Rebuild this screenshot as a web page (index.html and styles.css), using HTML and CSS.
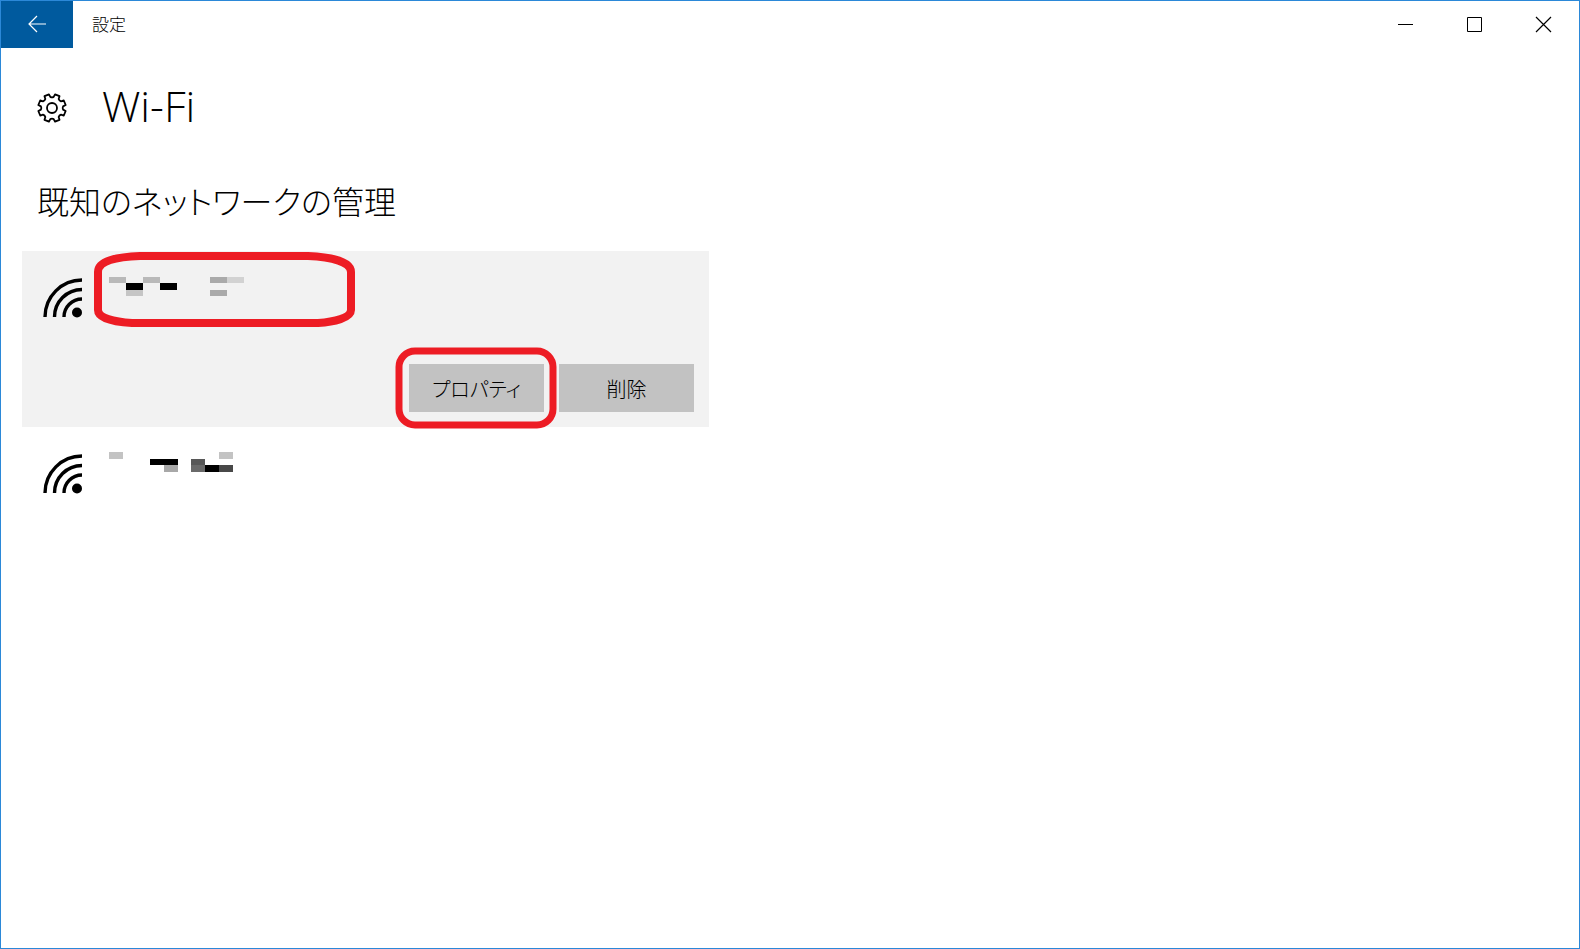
FILE: index.html
```
<!DOCTYPE html>
<html lang="ja">
<head>
    <meta charset="UTF-8">
    <meta name="viewport" content="width=device-width, initial-scale=1.0">
    <title>設定</title>
    <link rel="stylesheet" href="styles.css">
</head>
<body>
    <div class="window">
        <header class="titlebar">
            <button type="button" class="back" aria-label="戻る">
                <svg width="20" height="18" viewBox="0 0 20 18"><path d="M10 0L2 8l8 8M2 8h17" fill="none" stroke="#fff" stroke-width="1.2"/></svg>
            </button>
            <span class="app-name">設定</span>
            <button type="button" class="caption" aria-label="最小化">
                <svg width="15" height="15" viewBox="0 0 15 15"><path d="M0 7.5h15" stroke="#000"/></svg>
            </button>
            <button type="button" class="caption" aria-label="最大化">
                <svg width="15" height="15" viewBox="0 0 15 15"><path d="M.5.5h14v14H.5z" fill="none" stroke="#000"/></svg>
            </button>
            <button type="button" class="caption" aria-label="閉じる">
                <svg width="15" height="15" viewBox="0 0 15 15"><path d="M0 0l15 15M15 0L0 15" stroke="#000" stroke-width="1.2"/></svg>
            </button>
        </header>

        <main>
            <div class="page-title">
                <svg width="32" height="32" viewBox="-16 -16 32 32" fill="none" stroke="#000" stroke-width="1.8" stroke-linejoin="round">
                    <path d="M1.66-11.08L3.03-13.67 7.52-11.81 6.66-9Q7.2-7.2 9-6.66L11.81-7.52 13.67-3.03 11.08-1.66Q10.2 0 11.08 1.66L13.67 3.03 11.81 7.52 9 6.66Q7.2 7.2 6.66 9L7.52 11.81 3.03 13.67 1.66 11.08Q0 10.2-1.66 11.08L-3.03 13.67-7.52 11.81-6.66 9Q-7.2 7.2-9 6.66L-11.81 7.52-13.67 3.03-11.08 1.66Q-10.2 0-11.08-1.66L-13.67-3.03-11.81-7.52-9-6.66Q-7.2-7.2-6.66-9L-7.52-11.81-3.03-13.67-1.66-11.08Q0-10.2 1.66-11.08Z"/>
                    <circle r="5"/>
                </svg>
                <h1>Wi-Fi</h1>
            </div>
            <h2>既知のネットワークの管理</h2>

            <ul class="networks">
                <li class="network selected">
                    <div class="network-head">
                        <svg class="wifi" width="40" height="40" viewBox="0 0 40 40">
                            <path d="M2 40A37 37 0 0 1 39 3M11.500 40A27.500 27.500 0 0 1 39 12.500M21 40A18 18 0 0 1 39 22" fill="none" stroke="#000" stroke-width="3.400"/>
                            <circle cx="34" cy="35.500" r="5"/>
                        </svg>
                        <svg class="masked" width="136" height="20" viewBox="0 0 136 20" shape-rendering="crispEdges">
                            <path d="M0 0h17v6H0zM34 0h17v6H34z" fill="#b9b9b9"/>
                            <path d="M17 6h17v7H17zM51 6h17v7H51z"/>
                            <path d="M17 13h17v6H17z" fill="#c5c5c5"/>
                            <path d="M101 0h17v6h-17zM101 13h17v6h-17z" fill="#aaa"/>
                            <path d="M118 0h17v6h-17z" fill="#d2d2d2"/>
                        </svg>
                        <svg class="mark mark-name" width="261" height="75" viewBox="0 0 261 75">
                            <path d="M4 20C4 9 22 5 46 4H214C238 5 257 10 257 20V58C257 66 240 70 224 71H38C20 70 4 66 4 58Z"/>
                        </svg>
                    </div>
                    <div class="actions">
                        <span class="action">
                            <button type="button">プロパティ</button>
                            <svg class="mark mark-button" width="162" height="82" viewBox="0 0 162 82">
                                <rect x="4" y="4" width="154" height="74" rx="16"/>
                            </svg>
                        </span>
                        <span class="action"><button type="button">削除</button></span>
                    </div>
                </li>
                <li class="network">
                    <div class="network-head">
                        <svg class="wifi" width="40" height="40" viewBox="0 0 40 40">
                            <path d="M2 40A37 37 0 0 1 39 3M11.500 40A27.500 27.500 0 0 1 39 12.500M21 40A18 18 0 0 1 39 22" fill="none" stroke="#000" stroke-width="3.400"/>
                            <circle cx="34" cy="35.500" r="5"/>
                        </svg>
                        <svg class="masked" width="136" height="20" viewBox="0 0 136 20" shape-rendering="crispEdges">
                            <path d="M0-1h14v7H0zM110-1h14v7h-14z" fill="#c3c3c3"/>
                            <path d="M41 6h28v6H41zM96 12h14v7H96z"/>
                            <path d="M55 12h14v7H55z" fill="#a8a8a8"/>
                            <path d="M82 6h14v6H82z" fill="#585858"/>
                            <path d="M82 12h14v7H82z" fill="#6a6a6a"/>
                            <path d="M110 12h14v7h-14z" fill="#484848"/>
                        </svg>
                    </div>
                </li>
            </ul>
        </main>
    </div>
</body>
</html>
```
FILE: styles.css
```
* {
    box-sizing: border-box;
}
body {
    margin: 0;
    font-family: "Noto Sans CJK JP", sans-serif;
    font-weight: 300;
    font-feature-settings: "palt";
    color: #000;
    background-color: #fff;
}
svg {
    display: block;
    flex: none;
    overflow: visible;
}
.window {
    min-height: 100vh;
    border: 1px solid #2b88d8;
}

/* Title bar */
.titlebar {
    display: flex;
    height: 47px;
    padding-right: 1px;
}
.titlebar button {
    display: flex;
    align-items: center;
    justify-content: center;
    padding: 0;
    border: 0;
    background: none;
}
.titlebar .back {
    width: 72px;
    background-color: #005a9e;
}
.app-name {
    flex: 1;
    padding-left: 19px;
    font-size: 17px;
    line-height: 45px;
}
.titlebar .caption {
    width: 69px;
}

/* Page headings */
main {
    padding: 24px 21px;
}
.page-title {
    display: flex;
    align-items: center;
    gap: 34px;
    height: 72px;
    padding-left: 14px;
}
h1, h2 {
    margin: 0;
    font-weight: 300;
}
h1 {
    padding-bottom: 4px;
    font-family: "Open Sans", sans-serif;
    font-size: 43px;
    line-height: 68px;
}
h2 {
    margin: 30px 0 25px;
    padding-left: 15px;
    font-size: 32px;
    line-height: 52px;
}

/* Network list */
.networks {
    width: 100%;
    max-width: 687px;
    margin: 0;
    padding: 0;
    list-style: none;
}
.network.selected {
    background-color: #f2f2f2;
}
.network-head {
    position: relative;
    display: flex;
    gap: 26px;
    padding: 26px 21px 0;
}
.actions {
    display: flex;
    justify-content: flex-end;
    gap: 15px;
    padding: 47px 15px 15px;
}
.action {
    position: relative;
}
.action button {
    display: block;
    width: 135px;
    height: 48px;
    padding: 0;
    border: 0;
    background-color: #c2c2c2;
    color: #000;
    font: inherit;
    font-feature-settings: inherit;
    font-size: 20px;
}

/* Red marker outlines */
.mark {
    position: absolute;
    fill: none;
    stroke: #ed1c24;
    stroke-width: 7px;
    pointer-events: none;
}
.mark-name {
    left: 72px;
    top: 1px;
    stroke-width: 8px;
}
.mark-button {
    left: -14px;
    top: -17px;
}
```
